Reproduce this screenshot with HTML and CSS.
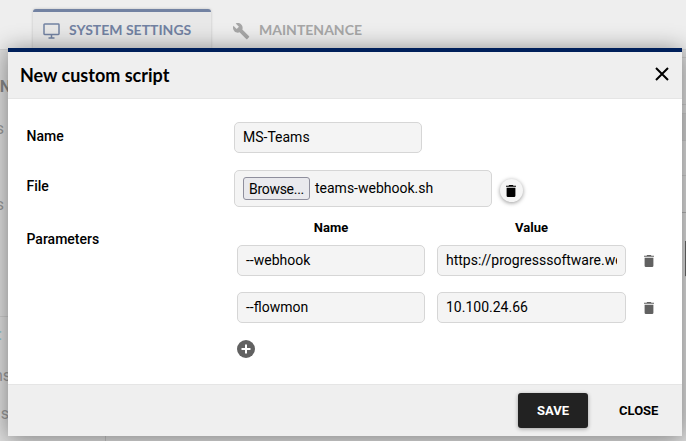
FILE: index.html
```html
<!DOCTYPE html>
<html lang="en">
<head>
<meta charset="utf-8">
<title>New custom script</title>
<link rel="stylesheet" href="styles.css">
</head>
<body>
<svg class="sprite" aria-hidden="true">
  <symbol id="trash" viewBox="0 0 10 12"><path d="M0 .7h2.5L3.2 0h3.6l.7.7H10v1.1H0zM.6 2.7h8.8v8q0 1.3-1.3 1.3H1.9Q.6 12 .6 10.700z"/></symbol>
</svg>
<div class="page">
  <nav class="tabs">
    <div class="tab active">
      <svg class="monitor" viewBox="0 0 17 16"><path d="M1.700 1h13.600q.7 0 .7.7v9.100q0 .7-.7.7H1.700q-.7 0-.7-.7V1.700q0-.7.7-.7zM8.500 12v2.500M5.500 15h6" fill="none" stroke="currentColor" stroke-width="1.500"/></svg>
      <span>SYSTEM SETTINGS</span>
    </div>
    <div class="tab">
      <svg class="wrench" viewBox="1 1 23 23"><path fill="currentColor" d="M22.700 19l-9.100-9.100c.9-2.300.4-5-1.500-6.900-2-2-5-2.400-7.400-1.300L9 6 6 9 1.600 4.700C.4 7.100.9 10.100 2.900 12.100c1.900 1.900 4.600 2.400 6.900 1.500l9.100 9.100c.4.4 1 .4 1.400 0l2.300-2.300c.5-.4.5-1.100.1-1.400z"/></svg>
      <span>MAINTENANCE</span>
    </div>
  </nav>
  <div class="content">
    <div class="side">
      <b>N</b><span class="s1">s</span><span class="s2">s</span><div class="rule"></div><span class="s3">:</span><span class="s4">ns</span><span class="s5">s</span>
    </div>
    <div class="rail"><div class="r1"></div><div class="r2"></div><div class="r6"></div><div class="r7"></div><div class="r3"></div><div class="r4"></div><div class="r5"></div></div>
  </div>
</div>
<div class="modal" role="dialog">
  <header>
    <h1>New custom script</h1>
    <svg class="close" viewBox="0 0 14 14"><path d="M1 1l12 12M13 1L1 13" stroke="#000" stroke-width="2"/></svg>
  </header>
  <main>
    <div class="row name"><label>Name</label><div class="input">MS-Teams</div></div>
    <div class="row file"><label>File</label><div class="input picker"><span class="browse">Browse...</span><span>teams-webhook.sh</span></div><span class="round"><svg class="bin"><use href="#trash"/></svg></span></div>
    <div class="row params"><label>Parameters</label>
      <div class="grid">
        <strong>Name</strong><strong>Value</strong><i></i>
        <div class="input">--webhook</div><div class="input"><span class="clip">https://progresssoftware.webhook</span></div><svg class="bin grey"><use href="#trash"/></svg>
        <div class="input low">--flowmon</div><div class="input low">10.100.24.66</div><svg class="bin grey low"><use href="#trash"/></svg>
        <svg class="add" viewBox="0 0 18 18"><circle cx="9" cy="9" r="9"/><path d="M9 4.500v9M4.500 9h9" stroke="#fff" stroke-width="2"/></svg>
      </div>
    </div>
  </main>
  <footer><span class="save">SAVE</span><span class="cancel">CLOSE</span></footer>
</div>
</body>
</html>
```
FILE: styles.css
```css
* { box-sizing: border-box; }
body { margin: 0; width: 686px; height: 441px; overflow: hidden; position: relative; background: #eee; font: 14px Roboto, sans-serif; color: #000; }
.sprite { position: absolute; width: 0; height: 0; }
svg { display: block; flex: none; }
.page { height: 441px; display: flex; flex-direction: column; }
.tabs { height: 49px; padding: 9px 0 0 33px; display: flex; flex: none; }
.tab { display: flex; align-items: center; font: 700 14px Lato, sans-serif; color: #a7a7a7; padding: 3px 0 0 22px; height: 40px; }
.tab span { padding-bottom: 2px; }
.tab.active { width: 178px; padding: 0 0 0 10px; color: #7282a2; background: #e8e8e8; border-top: 3px solid #7282a2; border-radius: 3px 3px 0 0; box-shadow: 0 0 3px #0003; }
.monitor { width: 17px; height: 16px; margin-right: 9px; }
.wrench { width: 17px; height: 17px; margin: 1px 9px 0 0; }
.content { flex: 1; display: flex; justify-content: space-between; background: #dedede; border-top: 1px solid #d4d4d4; }
.side { width: 106px; padding-right: 94px; border-right: 1px solid #c4c4c4; display: flex; flex-direction: column; align-items: flex-end; color: #999; font-size: 16px; line-height: 20px; }
.side b { margin-top: 27px; color: #888; }
.side span { white-space: nowrap; }
.s1, .s2 { margin-right: 7px; }
.s1 { margin-top: 22px; }
.s2 { margin-top: 56px; }
.rule { width: 11px; height: 1px; margin-top: 101px; background: #ccc; flex: none; }
.s3 { margin: 8px 9px 0 0; color: #8fc4cf; }
.s4 { margin-top: 21px; }
.s5 { margin: 18px 2px 0 0; }
.rail { width: 5px; }
.rail div { border-bottom: 1px solid #ccc; }
.r1 { height: 8px; }
.r2 { height: 47px; }
.r6 { height: 9px; }
.r7 { height: 27px; background: #d3d3d3; }
.r3 { height: 35px; }
.rail .r4 { height: 37px; border-color: #b4b4b4; }
.rail .r5 { height: 36px; margin: 28px 0 0 4px; background: #666; }
.modal { position: absolute; left: 8px; top: 48px; width: 674px; height: 388px; background: #fff; border-top: 4px solid #00205b; box-shadow: 0 2px 22px rgba(0,0,0,.45); display: flex; flex-direction: column; }
header { height: 47px; flex: none; background: #efefef; border-bottom: 1px solid #e5e5e5; display: flex; align-items: center; justify-content: space-between; padding: 0 13.5px 0 12px; }
h1 { margin: 0; padding-bottom: 1px; font: 700 18px Lato, sans-serif; }
.close { width: 14px; height: 14px; margin-top: -3px; }
main { flex: 1; padding: 23px 0 0 18.5px; }
.row { display: flex; }
label { width: 207.5px; font-weight: 500; line-height: 16px; flex: none; }
.input { height: 31px; width: 188px; padding: 0 8px 2px; display: flex; align-items: center; background: #f4f4f4; border: 1px solid #d6d6d6; border-radius: 5px; }
.name label { padding-top: 6px; }
.file { margin-top: 17px; }
.file label { padding-top: 8px; }
.picker { width: 258px; height: 37px; }
.browse { width: 67px; height: 23px; margin: 2px 5px 0 0; border: 1px solid #8f8f9d; border-radius: 3px; background: #e9e9ed; letter-spacing: -.3px; display: flex; justify-content: center; align-items: center; }
.round { width: 23px; height: 23px; margin: 9px 0 0 7.5px; border-radius: 50%; background: #f5f5f5; box-shadow: 0 1px 4px #0006; display: flex; align-items: center; justify-content: center; }
.bin { width: 10px; height: 12px; }
.grey { fill: #616161; margin-left: 6px; }
.params { margin-top: 13px; }
.params label { padding-top: 11px; width: 210.5px; }
.grid { display: grid; grid-template: 25px 31px 47px 42px / 188px 189px 16px; column-gap: 12px; align-items: center; }
.grid .input { width: auto; }
.low { align-self: end; }
.grey.low { margin-bottom: 9px; }
strong { font-size: 13px; line-height: 15px; text-align: center; align-self: start; }
.clip { overflow: hidden; white-space: nowrap; }
.add { width: 18px; height: 18px; margin: 0 0 7px -.5px; fill: #616161; align-self: end; }
footer { height: 52px; background: #efefef; border-top: 1px solid #e5e5e5; display: flex; align-items: center; padding-left: 510px; font-size: 13px; font-weight: 700; }
.save { width: 70px; height: 35px; line-height: 35px; text-align: center; color: #fff; background: #222; border-radius: 3px; box-shadow: 0 1px 4px #0005; }
.cancel { margin-left: 31px; }
```
